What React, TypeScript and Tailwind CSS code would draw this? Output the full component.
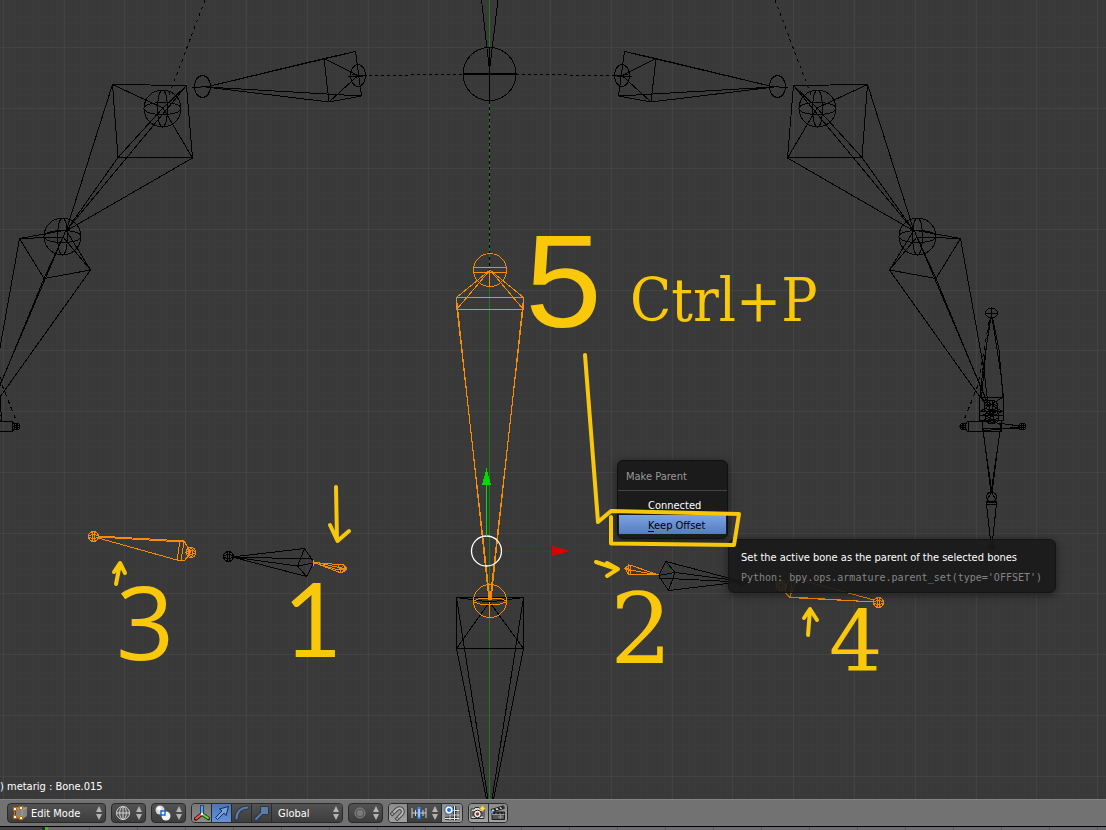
import React, { useState } from "react";

const range = (n: number) => Array.from({ length: n }, (_, i) => i);

function Grid() {
  return (
    <g shapeRendering="crispEdges">
      <g stroke="#3b3b3b">
        {range(184).map((i) => (
          <line key={"v" + i} x1={2.6 + i * 6.08} x2={2.6 + i * 6.08} y1="0" y2="799" />
        ))}
        {range(132).map((i) => (
          <line key={"h" + i} y1={4.5 + i * 6.075} y2={4.5 + i * 6.075} x1="0" x2="1106" />
        ))}
      </g>
      <g stroke="#434343">
        {range(19).map((i) => (
          <line key={"v" + i} x1={3.2 + i * 60.8} x2={3.2 + i * 60.8} y1="0" y2="799" />
        ))}
        {range(13).map((i) => (
          <line key={"h" + i} y1={47.3 + i * 60.73} y2={47.3 + i * 60.73} x1="0" x2="1106" />
        ))}
      </g>
      <line x1="489.5" x2="489.5" y1="0" y2="799" stroke="#237a23" />
    </g>
  );
}

function Joint({ x, y, r }: { x: number; y: number; r: number }) {
  return (
    <g>
      <circle cx={x} cy={y} r={r} />
      <ellipse cx={x} cy={y} rx={r} ry={r * 0.33} />
      <ellipse cx={x} cy={y} rx={r * 0.27} ry={r} />
    </g>
  );
}

/* One arm of the rig, drawn for the right side; the left side is its mirror. */
function Arm() {
  return (
    <g>
      {/* clavicle */}
      <path d="M624.5 51.5L656 58.5L651 102L618.5 96ZM656 58.5L622 75.5L651 102M624.5 51.5L774 87M656 58.5L774 87M618.5 96L774 87M651 102L774 87M613 75L632 77M770 86L788 88M617 77L628 74" />
      <ellipse cx="622" cy="75.5" rx="7.5" ry="11" />
      <ellipse cx="777.5" cy="86.5" rx="8" ry="11" />
      <path d="M775 0L811 95" strokeDasharray="3 4" />
      {/* upper arm */}
      <Joint x={817.5} y={108.5} r={18.5} />
      <path d="M867.5 84.5L793.5 85.5L787.5 158L862 157.5ZM867.5 84.5L817 108L793.5 85.5M787.5 158L817 108L862 157.5M867.5 84.5L914 231M793.5 85.5L914 231M787.5 158L914 231M862 157.5L914 231" />
      {/* forearm */}
      <Joint x={917.5} y={236.5} r={18.5} />
      <path d="M914 230L960.5 238.5L936 278.5L889.5 270L914 230M917 237L960.5 238.5M917 237L889.5 270M917 237L936 278.5M960.5 238.5L984 370L988 405M889.5 270L980 397L988 406M936 278.5L988 405M914 230L989 406" />
      {/* hand */}
      <ellipse cx="991.5" cy="313" rx="6" ry="5" />
      <path d="M985 313H998M991.5 307V319" />
      <path d="M991 317L983 368L980 397M992 317L1001 375L1003.5 397M990 320L986 350L981.5 397M993 320L999 350L1003 397" />
      <path d="M979.5 397.5H1003.5V411.5H979.5ZM979.5 397L1003 412M979.5 412L1003 397M978.5 415.5H1004M979 412V420H1003.5V412M982 420V431H1001V420M982 421L1001 412M983 414L1002 426" />
      <Joint x={991} y={407} r={7} />
      <Joint x={992} y={417} r={7} />
      <path d="M982 420L985 445L991 493M983 431L992 493M1001.5 420L998 445L992 493M1000 431L991 493" />
      <circle cx="991.5" cy="497" r="5" />
      <path d="M986.5 501H996.5V504H986.5ZM987 502.5H996M987 500L991.5 492L996 500M986.5 504L991 545M996.5 504L992 545" />
      <Joint x={991.5} y={547} r={3} />
      {/* thumb */}
      <Joint x={963} y={426.5} r={3} />
      <path d="M964 426L968 421H982L1020 426M964 427L968 432L982 431L1020 427M968 421V432M982 428H1020" />
      <Joint x={1022.5} y={426.5} r={3.5} />
      <path d="M989 322L978 385L964 420" strokeDasharray="4 4" />
    </g>
  );
}

function Armature() {
  return (
    <svg
      viewBox="0 0 1106 799"
      preserveAspectRatio="xMidYMid slice"
      className="absolute inset-0 size-full"
      aria-hidden="true"
    >
      <rect width="1106" height="799" fill="#393939" />
      <Grid />
      <g fill="none" stroke="#000" shapeRendering="crispEdges">
        <Arm />
        <g transform="matrix(-1 0 0 1 980 0)">
          <Arm />
        </g>
        {/* neck and spine */}
        <circle cx="489.5" cy="74" r="26.5" />
        <path d="M489.5 47V101M481.5 0L489 66M498 0L490 66" />
        <path d="M464 74H517" strokeWidth="2" />
        <path d="M357 76L463 74M516 74L622 76M489.5 101V270" strokeDasharray="3 3" />
        {/* pelvis */}
        <path d="M456.5 597.5H523.5V648.5H456.5ZM456.5 648.5L489.5 602L523.5 648.5M456.5 597.5L489.5 602L523.5 597.5M456.5 597.5L490 812M456.5 648.5L489 812M523.5 597.5L490 812M523.5 648.5L491 812" />
        {/* numbered bones */}
        <Joint x={228.5} y={556.5} r={5} />
        <path d="M304.5 548.5L314 562.5L306.5 576.5L297.5 566ZM297.5 566L314 563M232 557L304.5 548.5M232 557L312 559M232 557L297.5 566M232 557L306.5 576.5" />
        <path d="M658.5 575.5L666 561.5L675 572.5L668.5 590.5ZM658.5 575.5L675 572.5M666 561.5L740 581M675 572.5L740 581M658.5 578L740 582M668.5 590.5L740 582" />
        <Joint x={741.5} y={582} r={4} />
      </g>
      <g fill="none" stroke="#f88c04" shapeRendering="crispEdges">
        <circle cx="490" cy="270" r="16.5" />
        <path d="M474 267.5H506M474 272.5H506M489.5 270V286M456.5 297.5H523.5V309.5H456.5ZM490 270L456.5 297.5M490 270L523.5 297.5M490 270L457 309M490 270L523 309" />
        <path d="M456.5 298L489 600M457 309L490 600M523.5 298L491 600M523 309L490 600" />
        <circle cx="490" cy="601" r="16.5" />
        <path d="M474 601L480 598H500L506 601M474 602L480 604H500L506 602M489.5 602V618" />
        <Joint x={93.5} y={536.5} r={5} />
        <Joint x={191} y={552.5} r={5} />
        <path d="M98 536L184 541L188 548L189 555L184 561L177 560L98 538M98 537L183 542M180 541L177 560M184 541L181 561M184 561L191 552L184 541" />
        <path d="M313 560V566M314 562.5L344 565L347 569L341 573ZM314 563L339 570L346 569M339 570L344 565M338 565L341 573M344 565V572M314 562L346 569M341 573L347 567" />
        <path d="M658.5 575L630 565L625 568L628 574ZM658.5 575L630 570L625 568M630 565V574M628 564V574M624 568L631 571" />
        <Joint x={781} y={585.5} r={5} />
        <path d="M797 579L874 600M784 592L790 597.5L874 602M792 597L874 602M788 580L785 592L790 597L792 581M790 597L794 586L797 579" />
        <Joint x={878.5} y={602.5} r={5} />
      </g>
      {/* transform manipulator */}
      <circle cx="486.5" cy="551" r="15" fill="none" stroke="#fff" strokeWidth="1.300" />
      <g shapeRendering="crispEdges">
        <rect x="486" y="485" width="1" height="51" fill="#00dc00" />
        <path d="M486.500 468L491 485H482Z" fill="#00dc00" />
        <rect x="502" y="551" width="50" height="1" fill="#c80000" />
        <path d="M570 551L552 546V556Z" fill="#dc0000" />
      </g>
    </svg>
  );
}

function Annotations() {
  return (
    <svg
      viewBox="0 0 1106 799"
      preserveAspectRatio="xMidYMid slice"
      className="pointer-events-none absolute inset-0 size-full"
    >
      <g fill="none" stroke="#f7c70a" strokeWidth="4" strokeLinecap="round" strokeLinejoin="round">
        <path d="M585 355L598 522L611 511L739 514L734 545L611 543.5V517" />
        <path d="M336 487L337 540M330 525L337.5 541L349 531" />
        <path d="M116 584L120 564M114 572L120 563L125 573" />
        <path d="M596 562L617 569M607 563L618 569L607 576" />
        <path d="M808 635L810 610M804 618L810 609L817 620" />
      </g>
      <g fill="#f9c80a">
        <text x="522" y="327" className="font-['Liberation_Mono',monospace] text-[138px]">5</text>
        <text x="630" y="321" className="font-['DejaVu_Serif_Condensed','DejaVu_Serif',serif] text-[60px]">Ctrl+P</text>
        <text x="116" y="660" className="font-['Open_Sans',sans-serif] text-[102px]">3</text>
        <text x="283" y="657" className="font-[Lato,sans-serif] text-[102px]">1</text>
        <text x="610" y="663" className="font-['DejaVu_Serif',serif] text-[98px]">2</text>
        <text x="829" y="671" className="font-['DejaVu_Serif',serif] text-[84px]">4</text>
      </g>
    </svg>
  );
}

function Arrows() {
  return (
    <svg viewBox="0 0 6 14" className="pointer-events-none h-[14px] w-[6px] shrink-0" fill="#b4b4b4" aria-hidden="true">
      <path d="M3 0L6 6H0ZM0 8H6L3 14Z" />
    </svg>
  );
}

function Icon({ children }: { children: React.ReactNode }) {
  return (
    <svg viewBox="0 0 16 16" className="size-4 shrink-0" fill="none" aria-hidden="true">
      {children}
    </svg>
  );
}

const dark = "bg-linear-to-b from-[#525252] to-[#3d3d3d]";
const lit = "bg-linear-to-b from-[#8c8c8c] to-[#a2a2a2]";
const group = "flex h-5 shrink-0 overflow-hidden rounded border border-[#2a2a2a] divide-x divide-[#2a2a2a] text-white";
const cell = "flex items-center justify-center";
const drop = "min-w-0 flex-1 appearance-none border-0 bg-transparent pt-0.5 pl-[3px] leading-4 outline-none";

function EditIcon() {
  return (
    <Icon>
      <path d="M4 3L9 1L15 2.500V11L10 14.500L4 12Z" fill="#858585" />
      <path d="M4 3L10 5V14M10 5L15 2.500" stroke="#a5a5a5" />
      <path d="M3 3L8 2.500M2.500 5V12M4 12.500L8 13.500" stroke="#d97400" />
      <g fill="#fff" stroke="#c96a00">
        <path d="M1.500 2.500H4.500V5.500H1.500ZM7.500 1.500H10.500V4.500H7.500ZM1.500 10.500H4.500V13.500H1.500ZM7.500 11.500H10.500V14.500H7.500Z" />
      </g>
    </Icon>
  );
}

function GlobeIcon() {
  return (
    <Icon>
      <circle cx="8" cy="8" r="6.500" fill="#555" stroke="#d2d2d2" />
      <path d="M8 1.500V14.500M1.500 8H14.500" stroke="#d2d2d2" />
      <ellipse cx="8" cy="8" rx="3.300" ry="6.500" stroke="#d2d2d2" />
    </Icon>
  );
}

function PivotIcon() {
  return (
    <Icon>
      <circle cx="5" cy="5" r="4.500" fill="#d8d8d8" />
      <circle cx="11" cy="11" r="4.500" fill="#f1f1f1" />
      <circle cx="4" cy="3.500" r="2" fill="#fff" />
      <path d="M6 6H10V10H6Z" fill="#fff" stroke="#1769e0" strokeWidth="1.500" />
    </Icon>
  );
}

function AxesIcon() {
  return (
    <Icon>
      <path d="M8 9L1.500 14" stroke="#3b0a0a" strokeWidth="3.500" strokeLinecap="round" />
      <path d="M8 9L14.500 13.500" stroke="#123b0a" strokeWidth="3.500" strokeLinecap="round" />
      <path d="M8 9V1" stroke="#0d2b60" strokeWidth="3.500" strokeLinecap="round" />
      <path d="M8 9L2 13.500" stroke="#f2604c" strokeWidth="2" strokeLinecap="round" />
      <path d="M8 9L14 13" stroke="#74dc3c" strokeWidth="2" strokeLinecap="round" />
      <path d="M8 9V1.500" stroke="#58a2ff" strokeWidth="2" strokeLinecap="round" />
      <circle cx="8" cy="9" r="1.200" fill="#fff" />
    </Icon>
  );
}

function TranslateIcon() {
  return (
    <Icon>
      <path d="M1.500 12.500L8 6L5.500 4L14.500 1.500L12 10.500L10 8L3.500 14.500Z" fill="#76a3dc" stroke="#152c50" strokeLinejoin="round" />
    </Icon>
  );
}

function RotateIcon() {
  return (
    <Icon>
      <path d="M2.500 13.500C2.500 7 7 2.500 13.500 2.500" stroke="#27364b" strokeWidth="4" strokeLinecap="round" />
      <path d="M2.500 13.500C2.500 7 7 2.500 13.500 2.500" stroke="#5d7da7" strokeWidth="2" strokeLinecap="round" />
    </Icon>
  );
}

function ScaleIcon() {
  return (
    <Icon>
      <path d="M2 14L8 8" stroke="#27364b" strokeWidth="4" strokeLinecap="round" />
      <path d="M6.500 1.500H14.500V9.500H6.500Z" fill="#5d7da7" stroke="#27364b" />
      <path d="M2 14L8 8" stroke="#5d7da7" strokeWidth="2" strokeLinecap="round" />
    </Icon>
  );
}

function ProportionalIcon() {
  return (
    <Icon>
      <circle cx="8" cy="8" r="5" fill="#5a5a5a" stroke="#858585" />
      <circle cx="8" cy="8" r="3" fill="#7c7c7c" />
    </Icon>
  );
}

function MagnetIcon() {
  return (
    <Icon>
      <g transform="rotate(45 8 8)">
        <path d="M4.500 14.500V6.500A3.500 4 0 0 1 11.500 6.500V14.500" stroke="#484848" strokeWidth="4" />
        <path d="M4.500 13.500V6.500A3.500 4 0 0 1 11.500 6.500V13.500" stroke="#b8b8b8" strokeWidth="2" />
        <path d="M3 11.500H6M10 11.500H13" stroke="#5c5c5c" />
      </g>
    </Icon>
  );
}

function IncrementIcon() {
  return (
    <Icon>
      <path d="M1 3V13M4.500 5V11M12 5V11M15 3V13M1 8H15" stroke="#d0d0d0" />
      <path d="M8 2V14" stroke="#2f86ff" strokeWidth="3" />
      <path d="M8 4V12" stroke="#fff" />
    </Icon>
  );
}

function SnapTargetIcon() {
  return (
    <Icon>
      <path d="M6 9V15.500M10.500 1V15.500M14 1V15.500M1 13.500H15.500M1 10H15.500M9 5.500H15.500" stroke="#222" strokeWidth="2.500" />
      <path d="M6 9V15.500M10.500 1V15.500M14 1V15.500M1 13.500H15.500M1 10H15.500M9 5.500H15.500" stroke="#e8e8e8" />
      <circle cx="5" cy="5" r="4.200" fill="#fff" stroke="#2257a8" />
      <circle cx="5" cy="5" r="2" fill="#276fe0" />
    </Icon>
  );
}

function CameraIcon() {
  return (
    <Icon>
      <path d="M1 4H4L5 2.500H9L10 4H14V13.500H1Z" fill="#dadada" stroke="#2c2c2c" />
      <path d="M1.500 6H13.500V11.500H1.500Z" fill="#595959" />
      <circle cx="7.500" cy="9" r="3.800" fill="#f4f4f4" stroke="#222" />
      <circle cx="7.500" cy="9" r="1.800" fill="#8a3932" />
      <path d="M12.500 0L13.700 2.300L16 3.500L13.700 4.700L12.500 7L11.300 4.700L9 3.500L11.300 2.300Z" fill="#ffe45a" stroke="#b68b12" strokeWidth=".5" />
    </Icon>
  );
}

function ClapperIcon() {
  return (
    <Icon>
      <path d="M2 7H14.500V14.500H2Z" fill="#555" stroke="#1f1f1f" />
      <path d="M1 4.500L13.500 .8L14.500 3.300L2 7Z" fill="#eee" stroke="#1f1f1f" />
      <path d="M4 3.600L6 5.800M8 2.400L10 4.600M11.500 1.500L13.500 3.500M4 7V9M8 7V9M12 7V9" stroke="#1f1f1f" strokeWidth="2" />
      <path d="M2 9.500H14.500M8 12H13M10.500 10V14" stroke="#999" />
      <circle cx="2" cy="7" r="1.500" fill="#4d9be8" />
    </Icon>
  );
}

function Header() {
  const [tool, setTool] = useState("Translate");
  const tools = [
    { name: "Translate", icon: <TranslateIcon /> },
    { name: "Rotate", icon: <RotateIcon /> },
    { name: "Scale", icon: <ScaleIcon /> },
  ];
  return (
    <header className="flex h-[27px] shrink-0 items-center gap-[5px] border-t border-[#858585] bg-[#727272] pl-[7px]">
      <div className={`${group} ${dark} w-[99px] items-center divide-x-0 pr-[3px] pl-1`}>
        <EditIcon />
        <select aria-label="Mode" className={drop}>
          <option>Edit Mode</option>
          <option>Object Mode</option>
        </select>
        <Arrows />
      </div>
      <button aria-label="Viewport shading" className={`${group} ${dark} w-[35px] items-center justify-between divide-x-0 px-[3px]`}>
        <GlobeIcon />
        <Arrows />
      </button>
      <button aria-label="Pivot point" className={`${group} ${dark} w-[35px] items-center justify-between divide-x-0 px-[3px]`}>
        <PivotIcon />
        <Arrows />
      </button>
      <div className={`${group} w-[152px]`}>
        <button aria-label="Manipulator" className={`${cell} w-5 bg-linear-to-b from-[#787878] to-[#8c8c8c]`}>
          <AxesIcon />
        </button>
        {tools.map((t) => (
          <button
            key={t.name}
            aria-label={t.name}
            aria-pressed={tool === t.name}
            onClick={() => setTool(t.name)}
            className={`${cell} w-5 ${tool === t.name ? "bg-linear-to-b from-[#4c74b8] to-[#6592d8]" : dark}`}
          >
            {t.icon}
          </button>
        ))}
        <div className={`${dark} flex flex-1 items-center px-[3px]`}>
          <select aria-label="Transform orientation" className={drop}>
            <option>Global</option>
            <option>Local</option>
          </select>
          <Arrows />
        </div>
      </div>
      <button aria-label="Proportional editing" className={`${group} ${dark} w-[35px] items-center justify-between divide-x-0 px-[3px]`}>
        <ProportionalIcon />
        <Arrows />
      </button>
      <div className={`${group} w-[75px]`}>
        <button aria-label="Snap" className={`${cell} ${lit} w-[19px]`}>
          <MagnetIcon />
        </button>
        <button aria-label="Snap element" className={`${dark} flex flex-1 items-center justify-between px-[3px]`}>
          <IncrementIcon />
          <Arrows />
        </button>
        <button aria-label="Snap to grid" className={`${cell} ${lit} w-5`}>
          <SnapTargetIcon />
        </button>
      </div>
      <div className={`${group} w-10`}>
        <button aria-label="Render image" className={`${cell} ${lit} flex-1`}>
          <CameraIcon />
        </button>
        <button aria-label="Render animation" className={`${cell} ${lit} flex-1`}>
          <ClapperIcon />
        </button>
      </div>
    </header>
  );
}

export default function App() {
  return (
    <div className="flex min-h-screen flex-col overflow-hidden bg-[#393939] font-['DejaVu_Sans_Condensed','DejaVu_Sans',sans-serif] text-[11px] leading-4 text-white">
      <main className="relative flex-1 overflow-hidden">
        <Armature />
        <p className="absolute bottom-1 left-0 whitespace-pre">) metarig : Bone.015</p>
        <div role="menu" className="absolute top-[460px] left-[617px] flex w-[111px] flex-col rounded-md border border-[#101010] bg-[#191919]/95 pb-1 shadow-[0_2px_8px_rgba(0,0,0,0.5)]">
          <h2 className="border-b border-[#444] px-2 pt-2 pb-[5px] text-[#999]">Make Parent</h2>
          <button role="menuitem" className="mt-1 h-5 pt-px pl-[30px] text-left leading-5">Connected</button>
          <button role="menuitem" className="mx-px h-[19px] bg-linear-to-b from-[#7ca2e4] to-[#557ebd] pt-px pl-[29px] text-left leading-5 whitespace-nowrap text-black">
            <u className="underline-offset-2">K</u>eep Offset
          </button>
        </div>
        <div role="tooltip" className="absolute top-[539px] left-[728px] w-[328px] rounded-md border border-[#141414] bg-[#191919]/90 px-3 pt-[10px] pb-[6px] whitespace-nowrap shadow-[0_2px_8px_rgba(0,0,0,0.5)]">
          <p>Set the active bone as the parent of the selected bones</p>
          <p className="mt-1 font-['DejaVu_Sans_Mono',monospace] text-[10px] text-[#858585]">
            Python: bpy.ops.armature.parent_set(type='OFFSET')
          </p>
        </div>
        <Annotations />
      </main>
      <Header />
      <footer className="flex h-1 shrink-0 border-t border-black bg-[#6d6b6e]">
        <span className="w-[42px] bg-[#454345]" />
        <span className="w-[3px] bg-[#2a2a2a]" />
        <span className="w-[3px] bg-[#42b822]" />
        <span className="flex-1 bg-[repeating-linear-gradient(90deg,transparent_0px,transparent_41px,#5a585b_41px,#5a585b_42px,transparent_42px,transparent_48px)]" />
      </footer>
    </div>
  );
}
